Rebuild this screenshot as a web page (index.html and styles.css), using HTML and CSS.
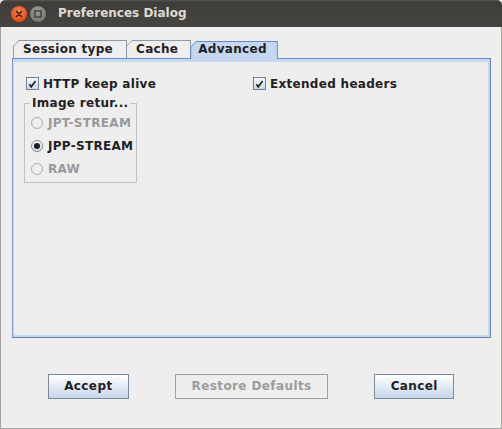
FILE: index.html
```html
<!DOCTYPE html>
<html>
<head>
<meta charset="utf-8">
<link rel="stylesheet" href="styles.css">
</head>
<body>
<div class="window">
  <div class="titlebar">
    <span class="wbtn wclose"><svg width="16" height="16" viewBox="0 0 16 16"><path d="M5.5 5.5 L10.5 10.5 M10.5 5.5 L5.5 10.5" stroke="#4a1a0a" stroke-width="1.6" stroke-linecap="round"/></svg></span>
    <span class="wbtn wmin"><svg width="16" height="16" viewBox="0 0 16 16"><rect x="5" y="5" width="6" height="6" fill="none" stroke="#3a3935" stroke-width="1.3"/></svg></span>
    <span class="title">Preferences Dialog</span>
  </div>
  <div class="content">
    <div class="tabs">
      <div class="tab t1"><span>Session type</span></div>
      <div class="tab t2"><span>Cache</span></div>
      <div class="tab t3 selected"><span>Advanced</span></div>
    </div>
    <div class="panel">
      <div class="row">
        <label class="check c1"><svg class="cb" width="13" height="13" viewBox="0 0 13 13"><rect x="0.5" y="0.5" width="12" height="12" fill="url(#g)" stroke="#6e7f91"/><path d="M3.4 7.2 L5.2 9.8 L9.6 4" fill="none" stroke="#1c1c1c" stroke-width="1.6"/><defs><linearGradient id="g" x1="0" y1="0" x2="0" y2="1"><stop offset="0" stop-color="#f6f9fc"/><stop offset="1" stop-color="#c9d8e8"/></linearGradient></defs></svg><span>HTTP keep alive</span></label>
        <label class="check"><svg class="cb" width="13" height="13" viewBox="0 0 13 13"><rect x="0.5" y="0.5" width="12" height="12" fill="url(#g)" stroke="#6e7f91"/><path d="M3.4 7.2 L5.2 9.8 L9.6 4" fill="none" stroke="#1c1c1c" stroke-width="1.6"/></svg><span>Extended headers</span></label>
      </div>
      <fieldset class="group">
        <legend>Image retur...</legend>
        <div class="radio disabled"><span class="rb"></span><span>JPT-STREAM</span></div>
        <div class="radio on"><span class="rb"></span><span>JPP-STREAM</span></div>
        <div class="radio disabled"><span class="rb"></span><span>RAW</span></div>
      </fieldset>
    </div>
    <div class="buttons">
      <button class="btn">Accept</button>
      <button class="btn" disabled>Restore Defaults</button>
      <button class="btn">Cancel</button>
    </div>
  </div>
</div>
</body>
</html>
```
FILE: styles.css
```css
body {
  margin: 0;
  background: #eeeeee;
  font-family: "DejaVu Sans", sans-serif;
}
.window {
  width: 502px;
  height: 429px;
  display: flex;
  flex-direction: column;
  background: #eeeeee;
}
.titlebar {
  height: 27px;
  flex: none;
  display: flex;
  align-items: center;
  border-radius: 5px 5px 0 0;
  background: linear-gradient(#5a5853 0, #3e3d39 2px, #47453f 100%);
  padding-left: 11px;
}
.wbtn {
  width: 16px;
  height: 16px;
  border-radius: 50%;
  display: flex;
  box-sizing: border-box;
}
.wclose {
  background: radial-gradient(circle at 50% 35%, #f5845a, #e0501f 70%, #c8401a);
  box-shadow: 0 0 0 0.5px #6a2a12;
}
.wmin {
  margin-left: 3px;
  background: radial-gradient(circle at 50% 35%, #9a9893, #7e7c77 70%, #6a6863);
  box-shadow: 0 0 0 0.5px #2e2d2a;
}
.title {
  margin-left: 12px;
  color: #dfdbd2;
  font-weight: bold;
  font-size: 12px;
  margin-top: -1px;
}
.content {
  flex: 1;
  display: flex;
  flex-direction: column;
  border: 1px solid #a4a3a0;
  border-top: 0;
  padding-top: 13px;
  letter-spacing: 0.3px;
}
.tabs {
  display: flex;
  align-items: flex-end;
  margin-left: 12px;
  height: 18px;
}
.tab {
  height: 18px;
  box-sizing: border-box;
  padding: 1px 1px 0 1px;
  background: #8d9aa6;
  clip-path: polygon(0 6px, 6px 0, 100% 0, 100% 100%, 0 100%);
  font-size: 12px;
  font-weight: bold;
  color: #222;
}
.tab + .tab {
  margin-left: -1px;
}
.tab span {
  display: block;
  height: 100%;
  box-sizing: border-box;
  background: #eeeeee;
  clip-path: polygon(0 5px, 5px 0, 100% 0, 100% 100%, 0 100%);
  padding: 1px 13px 0 9px;
  line-height: 14px;
}
.tab.t2 span {
  padding: 1px 12px 0 9px;
}
.tab.selected {
  height: 18px;
  margin-bottom: -1px;
  margin-left: -1px;
  position: relative;
  z-index: 1;
  background: #6787c9;
}
.tab.selected span {
  background: #c6d8f0;
  padding: 0 10px 0 7px;
  line-height: 14px;
}
.panel {
  margin-left: 11px;
  width: 479px;
  height: 280px;
  box-sizing: border-box;
  border: 1px solid;
  border-color: #6a8bc8 #6b82a8 #6b82a8 #7d99d1;
  box-shadow: inset 1px 3px 0 #c6d8f0, inset -2px -2px 0 #c6d8f0;
  padding: 18px 0 0 13px;
  color: #222;
  font-size: 12px;
  font-weight: bold;
}
.row {
  display: flex;
  height: 13px;
  align-items: center;
}
.check {
  display: flex;
  align-items: center;
  gap: 4px;
  line-height: 14px;
}
.check.c1 {
  width: 227px;
}
.cb {
  flex: none;
  display: block;
}
.group {
  margin: 6px 0 0 -2px;
  width: 113px;
  box-sizing: border-box;
  border: 1px solid #bcc2ca;
  padding: 1px 0 2px 6px;
  min-width: 0;
}
.group legend {
  padding: 0 2px;
  margin-left: -1px;
  line-height: 14px;
}
.radio {
  height: 23px;
  display: flex;
  align-items: center;
  gap: 5px;
}
.rb {
  width: 12px;
  height: 12px;
  box-sizing: border-box;
  border-radius: 50%;
  border: 1px solid #7d8c99;
  background: linear-gradient(#f8fafc, #cfdbe8);
  display: flex;
  align-items: center;
  justify-content: center;
}
.radio.on .rb::after {
  content: "";
  width: 6px;
  height: 6px;
  border-radius: 50%;
  background: #1e1e1e;
}
.radio.disabled {
  color: #9a9a9a;
}
.radio.disabled .rb {
  border-color: #adadad;
  background: #eeeeee;
}
.buttons {
  margin-top: 36px;
  display: flex;
  justify-content: center;
  gap: 46px;
}
.btn {
  height: 25px;
  padding: 0 15.5px;
  border: 1px solid #7a8a99;
  background: linear-gradient(#ffffff 0%, #eef3f9 30%, #c5d6ea 100%);
  font-family: "DejaVu Sans", sans-serif;
  font-size: 12px;
  font-weight: bold;
  letter-spacing: 0.4px;
  color: #222;
  line-height: 23px;
  margin: 0;
}
.btn:disabled {
  background: #eeeeee;
  border-color: #a0a0a0;
  color: #9c9c9c;
}
```
